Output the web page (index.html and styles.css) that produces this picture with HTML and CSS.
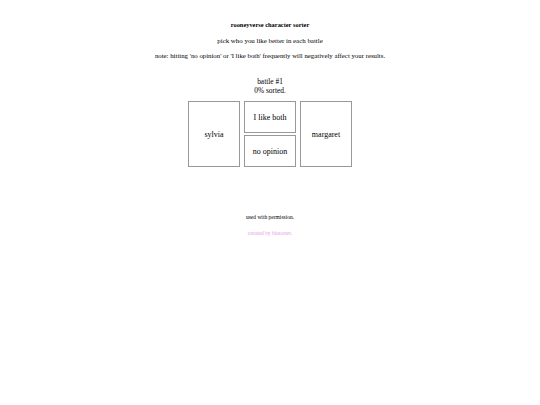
FILE: index.html
```html
<!DOCTYPE html>
<html>
<head>
<meta charset="utf-8">
<link rel="stylesheet" href="styles.css">
</head>
<body>
<div class="page">
  <p class="title">rooneyverse character sorter</p>
  <p class="sub">pick who you like better in each battle</p>
  <p class="note">note: hitting 'no opinion' or 'I like both' frequently will negatively affect your results.</p>
  <div class="progress">
    <div>battle #1</div>
    <div>0% sorted.</div>
  </div>
  <div class="battle">
    <div class="choice">sylvia</div>
    <div class="middle">
      <div class="choice small">I like both</div>
      <div class="choice small">no opinion</div>
    </div>
    <div class="choice">margaret</div>
  </div>
  <p class="perm">used with permission.</p>
  <p class="credit">created by biasorter.</p>
</div>
</body>
</html>
```
FILE: styles.css
```css
html, body {
  margin: 0;
  padding: 0;
  background: #fff;
}
.page {
  font-family: "Liberation Serif", "Times New Roman", serif;
  color: #000;
  text-align: center;
  padding-top: 21px;
}
.page p {
  margin: 0;
}
.title {
  font-weight: bold;
  font-size: 6.4px;
  line-height: 8px;
}
.sub {
  font-size: 6.9px;
  line-height: 8px;
  margin-top: 8px !important;
}
.note {
  font-size: 6.8px;
  line-height: 8px;
  margin-top: 7px !important;
}
.progress {
  font-size: 7.4px;
  line-height: 9px;
  margin-top: 17px;
}
.battle {
  display: flex;
  justify-content: center;
  gap: 4px;
  margin-top: 6px;
}
.choice {
  box-sizing: border-box;
  width: 52px;
  height: 66px;
  border: 1px solid #999;
  display: flex;
  align-items: center;
  justify-content: center;
  font-size: 8px;
}
.middle {
  display: flex;
  flex-direction: column;
  gap: 2px;
}
.choice.small {
  height: 32px;
}
.perm {
  font-size: 5.5px;
  line-height: 7px;
  margin-top: 47px !important;
}
.credit {
  font-size: 5.5px;
  line-height: 7px;
  margin-top: 9px !important;
  color: #e89ae6;
}
```
